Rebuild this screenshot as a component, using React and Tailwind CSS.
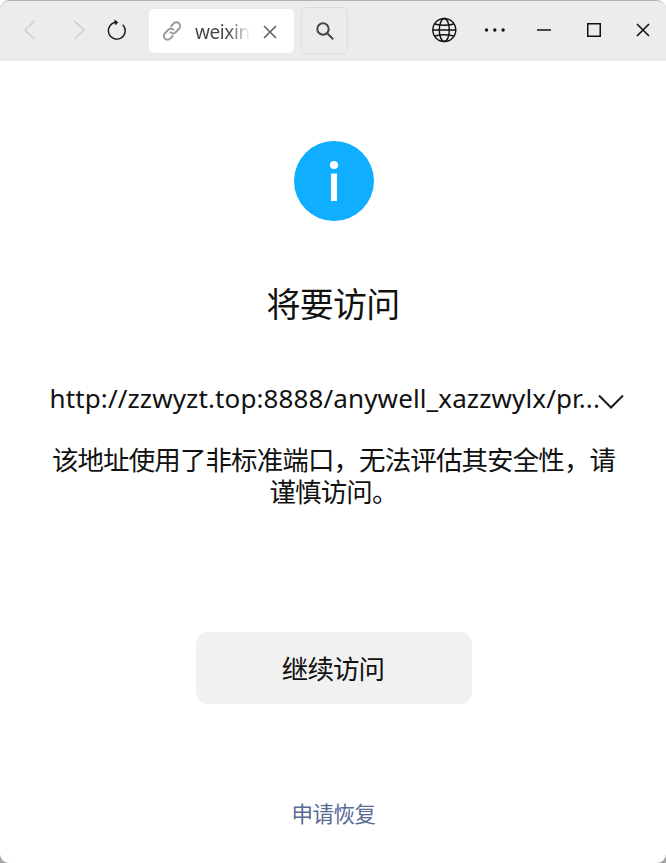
const CJK = "font-['Noto_Sans_CJK_SC',sans-serif]";

function Toolbar() {
  return (
    <header className="flex h-[61px] shrink-0 items-center rounded-t-[9px] border-t border-[#b2b2b2] bg-[#ececec] pb-[2px]">
      <svg className="ml-[20px] h-5 w-5 shrink-0" viewBox="0 0 20 20" fill="none" stroke="#cecece" strokeWidth="1.5">
        <path d="M14.5 1 5 10l9.500 9" />
      </svg>
      <svg className="ml-[29px] h-5 w-5 shrink-0" viewBox="0 0 20 20" fill="none" stroke="#cecece" strokeWidth="1.5">
        <path d="M5.300 1 15 10l-9.700 9" />
      </svg>
      <svg className="ml-[17px] h-[22px] w-[22px] shrink-0" viewBox="0 0 22 22" fill="none" stroke="#1a1a1a" strokeWidth="1.4">
        <path d="M16.700 5.700A8.400 8.400 0 1 1 10 3.300" />
        <path d="M8.500 1 12 3.300 9.500 6z" fill="#1a1a1a" strokeWidth="0.500" />
      </svg>
      <div className="mt-[2px] ml-[21px] flex h-11 w-[145px] shrink-0 items-center rounded-[5px] bg-white">
        <svg className="ml-[12px] h-[22px] w-[22px]" viewBox="0 0 24 24" fill="none" stroke="#9b9b9b" strokeWidth="2.200" strokeLinecap="round">
          <path d="M10.500 13.500a4 4 0 0 0 5 .4l4.200-4.400a4.050 4.050 0 0 0-5.800-5.800l-2.700 2.800" />
          <path d="M13.500 10.500a4 4 0 0 0-5-.4l-4.200 4.400a4.050 4.050 0 0 0 5.800 5.800l2.700-2.800" />
        </svg>
        <span className="mt-[2px] ml-[12px] w-[55px] overflow-hidden bg-linear-to-r from-[#454545] from-60% to-white bg-clip-text font-['Noto_Sans',sans-serif] text-[19px] leading-7 tracking-[-0.400px] text-transparent">
          weixin
        </span>
        <svg className="mt-[1px] ml-[13px] h-[14px] w-[14px]" viewBox="0 0 14 14" fill="none" stroke="#606060" strokeWidth="1.6">
          <path d="m1 1 12 12M13 1 1 13" />
        </svg>
      </div>
      <div className="mt-[1px] ml-[7px] flex h-[47px] w-[47px] shrink-0 items-center justify-center rounded-[5px] border border-[#dfdfdf]">
        <svg className="h-5 w-5" viewBox="0 0 20 20" fill="none" stroke="#454545" strokeWidth="2">
          <circle cx="8" cy="8" r="5.700" />
          <path d="m12.200 12.200 6 6" />
        </svg>
      </div>
      <svg className="ml-[83px] h-[26px] w-[26px] shrink-0" viewBox="0 0 26 26" fill="none" stroke="#111" strokeWidth="1.400">
        <circle cx="13.300" cy="13" r="11.500" />
        <ellipse cx="13.300" cy="13" rx="5" ry="11.500" />
        <path d="M1.800 13h23M3.800 7q9.500 2.500 19 0M3.800 19q9.500-2.500 19 0" />
      </svg>
      <svg className="ml-[27px] h-6 w-[22px] shrink-0" viewBox="0 0 22 24" fill="#111">
        <circle cx="2.500" cy="12" r="1.700" />
        <circle cx="10.800" cy="12" r="1.700" />
        <circle cx="19.100" cy="12" r="1.700" />
      </svg>
      <svg className="ml-[31px] h-[14px] w-[14px] shrink-0" viewBox="0 0 14 14" stroke="#111" strokeWidth="1.500">
        <path d="M0 7h14" />
      </svg>
      <svg className="ml-[36px] h-[14px] w-[14px] shrink-0" viewBox="0 0 14 14" fill="none" stroke="#111" strokeWidth="1.500">
        <path d="M.750.750h12.500v12.500H.750z" />
      </svg>
      <svg className="ml-[35px] h-[14px] w-[14px] shrink-0" viewBox="0 0 14 14" fill="none" stroke="#111" strokeWidth="1.600">
        <path d="m1 1 12 12M13 1 1 13" />
      </svg>
    </header>
  );
}

export default function App() {
  return (
    <div className="h-[863px] w-[666px] overflow-hidden bg-[linear-gradient(white_50%,#a5a5a5_50%)]">
      <div className={`flex h-full flex-col overflow-hidden rounded-b-[9px] bg-white text-[#111] ${CJK}`}>
        <Toolbar />
        <main className="flex flex-1 flex-col items-center pl-[1px]">
          <svg className="mt-[80px] ml-[1px] h-20 w-20 shrink-0" viewBox="0 0 80 80">
            <circle cx="40" cy="40" r="40" fill="#10aeff" />
            <circle cx="40" cy="24" r="4.100" fill="white" />
            <path d="M37 32.500h6V60h-6z" fill="white" />
          </svg>
          <h1 className="mt-[58px] -ml-[1px] text-[34px] leading-[48px] tracking-[-0.700px]">将要访问</h1>
          <div className="mt-[51px] flex h-10 w-[576px] items-center justify-between pl-[4px]">
            <span className="whitespace-nowrap font-['Noto_Sans',sans-serif] text-[26px] leading-10 tracking-[0.120px]">
              http://zzwyzt.top:8888/anywell_xazzwylx/pr...
            </span>
            <svg className="mt-[8px] -mr-[2px] -ml-[6px] h-[16px] w-[26px] shrink-0" viewBox="0 0 26 16" fill="none" stroke="#191919" strokeWidth="2">
              <path d="m1 1.500 12 12 12-12" />
            </svg>
          </div>
          <p className="mt-[25px] w-[574px] text-center text-[26.500px] leading-8 tracking-[-0.900px]">
            该地址使用了非标准端口，无法评估其安全性，请谨慎访问。
          </p>
          <button className="mt-[125px] ml-[1px] h-[72px] w-[276px] shrink-0 rounded-[12px] bg-[#f1f1f1] pr-[2px] text-[26.500px] tracking-[-0.900px]">
            继续访问
          </button>
          <a className="mt-[93px] text-[21.500px] leading-8 tracking-[-0.500px] text-[#576b95]">申请恢复</a>
        </main>
      </div>
    </div>
  );
}
